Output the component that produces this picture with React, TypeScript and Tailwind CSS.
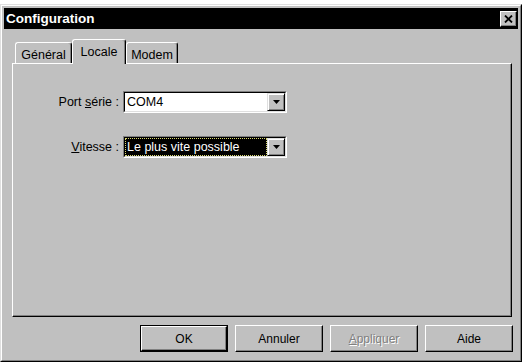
import React from 'react'

const font = { fontFamily: '"Liberation Sans", Arial, sans-serif' }

function Tab({ label, active, w }: { label: string; active?: boolean; w: string }) {
  if (active) {
    return (
      <div className={`relative z-10 -mb-px h-[25px] ${w} rounded-t-[3px] border-t border-l border-white border-r border-r-black bg-[#c0c0c0] shadow-[inset_-1px_0_0_#808080] flex items-start justify-center pt-[3px] text-[12.5px] text-black`}>
        {label}
      </div>
    )
  }
  return (
    <div className={`h-[21px] ${w} rounded-t-[3px] border-t border-l border-white border-r border-r-black shadow-[inset_-1px_0_0_#808080] flex items-start justify-center pt-[3px] text-[12.5px] text-black`}>
      {label}
    </div>
  )
}

function Arrow() {
  return (
    <div className="h-full w-[18px] bg-[#c0c0c0] border-t border-l border-t-[#dfdfdf] border-l-[#dfdfdf] border-r border-b border-r-black border-b-black shadow-[inset_1px_1px_0_#ffffff,inset_-1px_-1px_0_#808080] flex items-center justify-center">
      <svg width="7" height="4" viewBox="0 0 7 4">
        <path d="M0 0h7L3.5 4z" fill="#000" />
      </svg>
    </div>
  )
}

function Combo({ children }: { children: React.ReactNode }) {
  return (
    <div className="h-[22px] w-[164px] border-t border-l border-t-[#808080] border-l-[#808080] border-r border-b border-r-white border-b-white">
      <div className="h-full w-full border-t border-l border-t-black border-l-black border-r border-b border-r-[#dfdfdf] border-b-[#dfdfdf] bg-white flex">
        <div className="flex-1 flex items-center min-w-0">{children}</div>
        <Arrow />
      </div>
    </div>
  )
}

function Btn({ children, def }: { children: React.ReactNode; def?: boolean }) {
  return (
    <div className={`h-[27px] w-[88px] ${def ? 'border border-black' : ''}`}>
      <div className="h-full w-full border-t border-l border-white border-r border-b border-r-black border-b-black shadow-[inset_-1px_-1px_0_#808080] flex items-center justify-center text-[12px] text-black">
        {children}
      </div>
    </div>
  )
}

export default function App() {
  return (
    <div className="w-[526px] h-[362px] bg-white pt-[4px]" style={font}>
      <div className="w-[522px] h-[358px] border-t border-l border-[#dfdfdf] border-r border-b border-r-black border-b-black">
        <div className="h-full w-full border-t border-l border-white border-r border-b border-r-[#808080] border-b-[#808080] bg-[#c0c0c0] p-[2px] flex flex-col">
          {/* title bar */}
          <div className="h-[21px] bg-black flex items-center justify-between pl-[2px] pr-[1px]">
            <span className="text-white font-bold text-[13.5px] leading-none">Configuration</span>
            <div className="h-[16px] w-[17px] bg-[#c0c0c0] border-t border-l border-white border-r border-b border-r-black border-b-black shadow-[inset_-1px_-1px_0_#808080] flex items-center justify-center">
              <svg width="9" height="8" viewBox="0 0 9 8">
                <path d="M1 0.5L8 7.5M8 0.5L1 7.5" stroke="#000" strokeWidth="1.8" />
              </svg>
            </div>
          </div>

          {/* tabs */}
          <div className="mt-[10px] ml-[8px] h-[24px] flex items-end pl-[3px]">
            <Tab label="Général" w="w-[57px]" />
            <Tab label="Locale" w="w-[54px]" active />
            <Tab label="Modem" w="w-[52px]" />
          </div>

          {/* panel */}
          <div className="ml-[8px] w-[500px] h-[254px] border-t border-l border-white border-r border-b border-r-black border-b-black shadow-[inset_-1px_-1px_0_#808080] pt-[27px]">
            <div className="flex items-center">
              <div className="w-[106px] text-right text-[12.5px] text-black">
                Port <span className="underline">s</span>érie :
              </div>
              <div className="ml-[4px]">
                <Combo>
                  <span className="pl-[2px] text-[12.5px] text-black">COM4</span>
                </Combo>
              </div>
            </div>
            <div className="flex items-center mt-[23px]">
              <div className="w-[106px] text-right text-[12.5px] text-black">
                <span className="underline">V</span>itesse :
              </div>
              <div className="ml-[4px]">
                <Combo>
                  <div className="h-[18px] w-full bg-black border border-dotted border-[#d8d870] flex items-center">
                    <span className="pl-[1px] text-[12.5px] text-white whitespace-nowrap">Le plus vite possible</span>
                  </div>
                </Combo>
              </div>
            </div>
          </div>

          {/* buttons */}
          <div className="mt-[8px] ml-[136px] flex gap-[7px]">
            <Btn def>OK</Btn>
            <Btn>Annuler</Btn>
            <Btn>
              <span className="text-[#808080] [text-shadow:1px_1px_0_#ffffff]">
                <span className="underline">A</span>ppliquer
              </span>
            </Btn>
            <Btn>Aide</Btn>
          </div>
        </div>
      </div>
    </div>
  )
}
